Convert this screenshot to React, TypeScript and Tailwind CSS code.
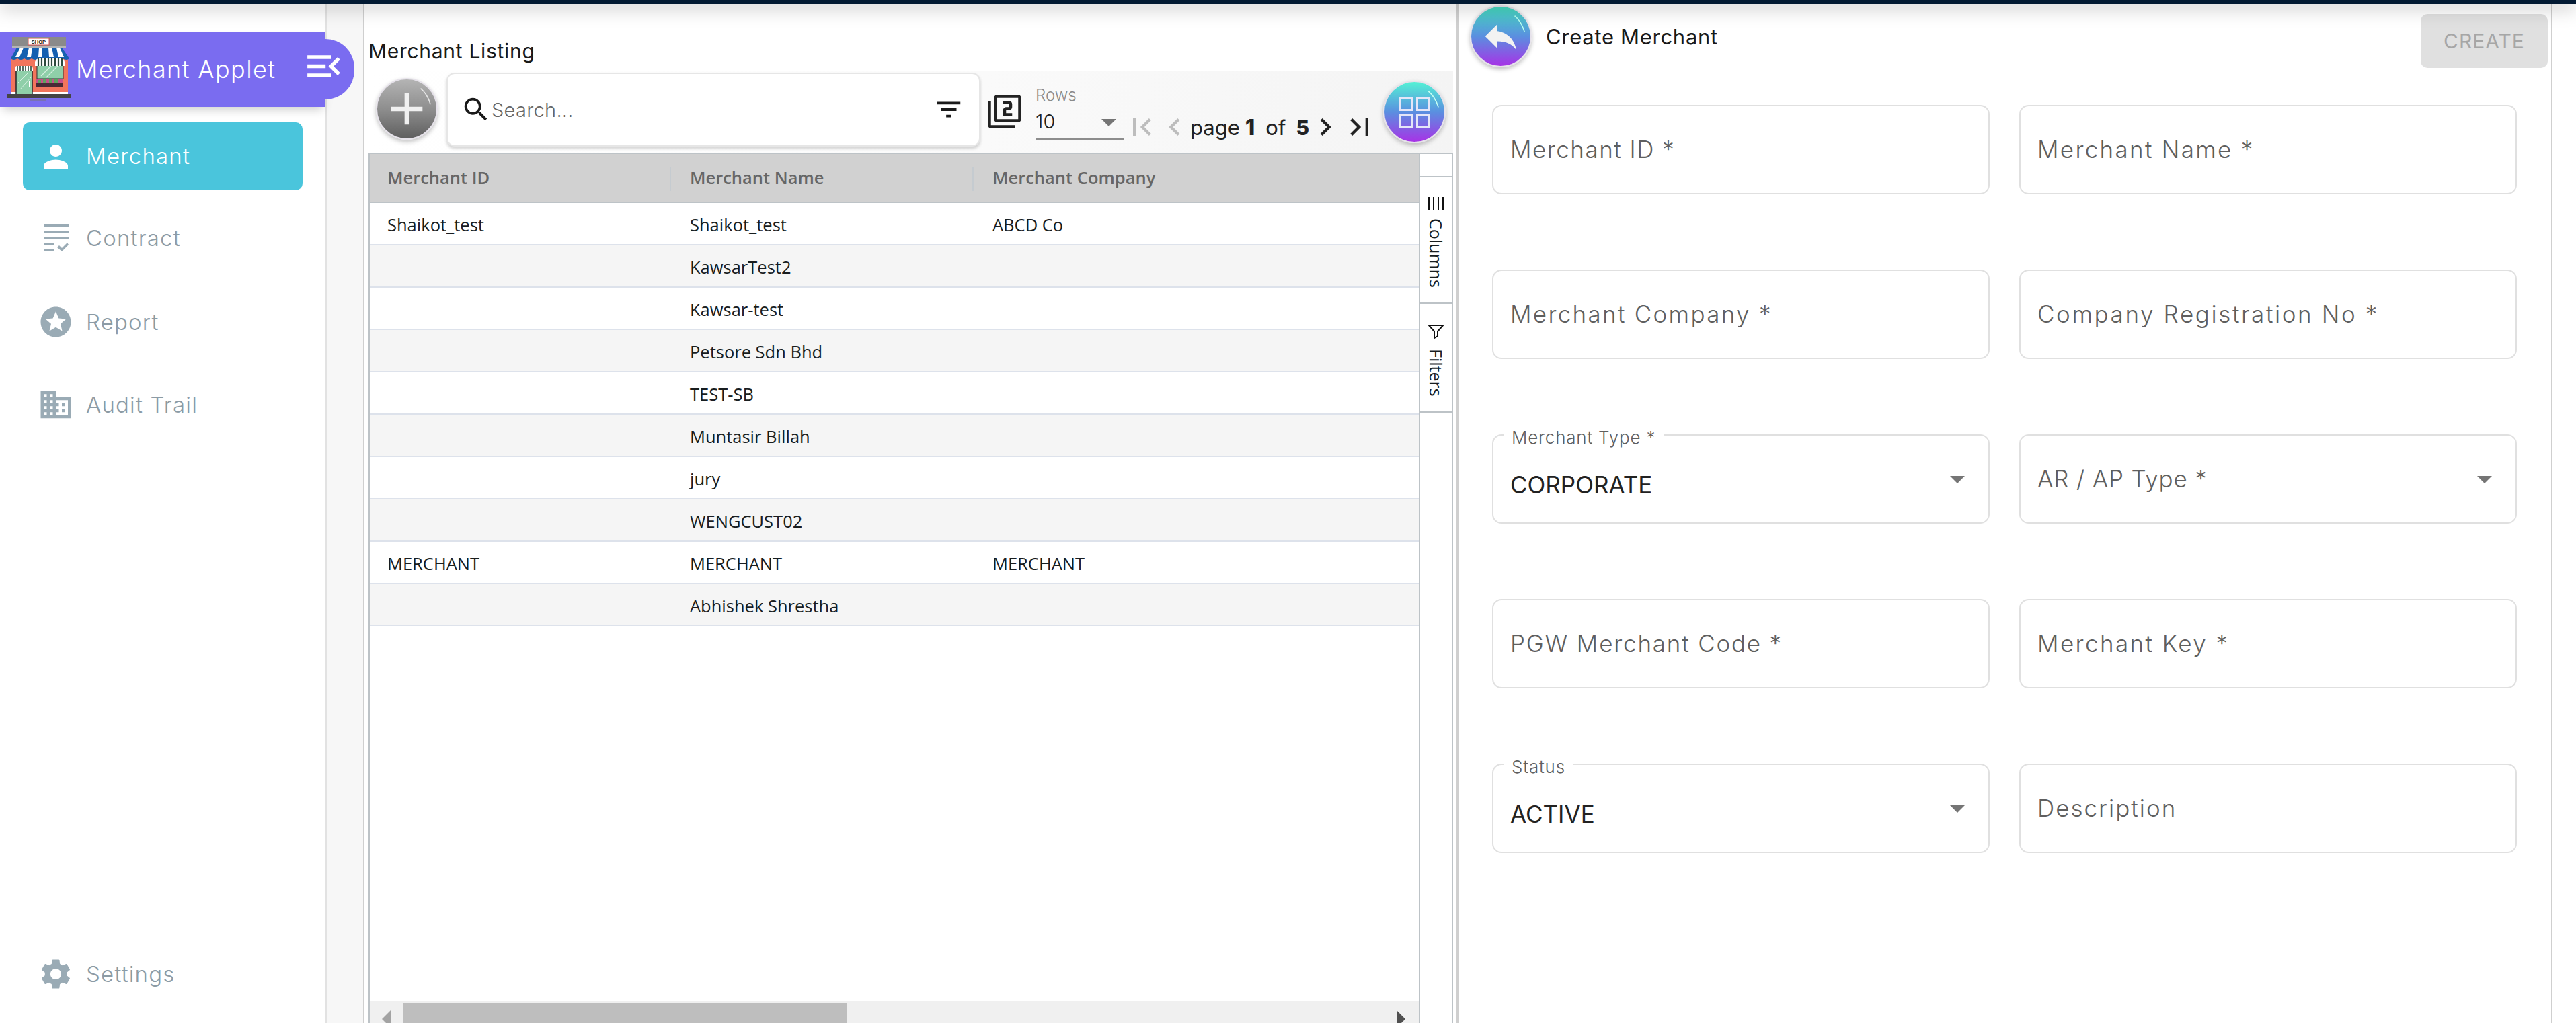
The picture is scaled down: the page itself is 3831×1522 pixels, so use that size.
import React from "react";

const P = ({ d, size, className = "" }: { d: string; size: number; className?: string }) => (
  <svg viewBox="0 0 24 24" width={size} height={size} className={`shrink-0 fill-current ${className}`}>
    <path d={d} />
  </svg>
);

const icons = {
  person: "M12 12c2.21 0 4-1.79 4-4s-1.79-4-4-4-4 1.79-4 4 1.79 4 4 4zm0 2c-2.67 0-8 1.34-8 4v2h16v-2c0-2.66-5.33-4-8-4z",
  stars: "M11.99 2C6.47 2 2 6.48 2 12s4.47 10 9.99 10C17.52 22 22 17.52 22 12S17.52 2 11.99 2zm4.24 16L12 15.45 7.77 18l1.12-4.81-3.73-3.23 4.92-.42L12 5l1.92 4.53 4.92.42-3.73 3.23L16.23 18z",
  domain: "M12 7V3H2v18h20V7H12zM6 19H4v-2h2v2zm0-4H4v-2h2v2zm0-4H4V9h2v2zm0-4H4V5h2v2zm4 12H8v-2h2v2zm0-4H8v-2h2v2zm0-4H8V9h2v2zm0-4H8V5h2v2zm10 12h-8v-2h2v-2h-2v-2h2v-2h-2V9h8v10zm-2-8h-2v2h2v-2zm0 4h-2v2h2v-2z",
  settings: "M19.14 12.94c.04-.3.06-.61.06-.94 0-.32-.02-.64-.07-.94l2.03-1.58c.18-.14.23-.41.12-.61l-1.92-3.32c-.12-.22-.37-.29-.59-.22l-2.39.96c-.5-.38-1.03-.7-1.62-.94l-.36-2.54c-.04-.24-.24-.41-.48-.41h-3.84c-.24 0-.43.17-.47.41l-.36 2.54c-.59.24-1.13.57-1.62.94l-2.39-.96c-.22-.08-.47 0-.59.22L2.74 8.87c-.12.21-.08.47.12.61l2.03 1.58c-.05.3-.09.63-.09.94s.02.64.07.94l-2.03 1.58c-.18.14-.23.41-.12.61l1.92 3.32c.12.22.37.29.59.22l2.39-.96c.5.38 1.03.7 1.62.94l.36 2.54c.05.24.24.41.48.41h3.84c.24 0 .44-.17.47-.41l.36-2.54c.59-.24 1.13-.56 1.62-.94l2.39.96c.22.08.47 0 .59-.22l1.92-3.32c.12-.22.07-.47-.12-.61l-2.01-1.58zM12 15.6c-1.98 0-3.6-1.62-3.6-3.6s1.62-3.6 3.6-3.6 3.6 1.62 3.6 3.6-1.62 3.6-3.6 3.6z",
  search: "M15.5 14h-.79l-.28-.27C15.41 12.59 16 11.11 16 9.5 16 5.91 13.09 3 9.5 3S3 5.91 3 9.5 5.91 16 9.5 16c1.61 0 3.09-.59 4.23-1.57l.27.28v.79l5 4.99L20.49 19l-4.99-5zm-6 0C7.01 14 5 11.99 5 9.5S7.01 5 9.5 5 14 7.01 14 9.5 11.99 14 9.5 14z",
  filterList: "M10 18h4v-2h-4v2zM3 6v2h18V6H3zm3 7h12v-2H6v2z",
  filter2: "M3 5H1v16c0 1.1.9 2 2 2h16v-2H3V5zm18-4H7c-1.1 0-2 .9-2 2v14c0 1.1.9 2 2 2h14c1.1 0 2-.9 2-2V3c0-1.1-.9-2-2-2zm0 16H7V3h14v14zm-4-4h-4v-2h2c1.1 0 2-.89 2-2V7c0-1.11-.9-2-2-2h-4v2h4v2h-2c-1.1 0-2 .89-2 2v4h6v-2z",
  reply: "M10 9V5l-7 7 7 7v-4.1c5 0 8.5 1.6 11 5.1-1-5-4-10-11-11z",
  menuOpen: "M3 18h13v-2H3v2zm0-5h10v-2H3v2zm0-7v2h13V6H3zm18 9.59L17.42 12 21 8.41 19.59 7l-5 5 5 5L21 15.59z",
  first: "M18.41 16.59L13.82 12l4.59-4.59L17 6l-6 6 6 6zM6 6h2v12H6z",
  prev: "M15.41 7.41L14 6l-6 6 6 6 1.41-1.41L10.83 12z",
  next: "M10 6L8.59 7.41 13.17 12l-4.58 4.59L10 18l6-6z",
  last: "M5.59 7.41L10.18 12l-4.59 4.59L7 18l6-6-6-6zM16 6h2v12h-2z",
  plus: "M19 13h-6v6h-2v-6H5v-2h6V5h2v6h6v2z",
};

const ShopLogo = () => (
  <svg viewBox="0 0 95 97" width={95} height={97} className="shrink-0">
    <rect x="7" y="0" width="80" height="16" fill="#8a8a8a" />
    <rect x="7" y="14" width="80" height="2" fill="#b5b5b5" />
    <rect x="31" y="2" width="31" height="10" fill="#fff" stroke="#d9534f" />
    <text x="46.5" y="10" fontSize="7.5" fontWeight="700" textAnchor="middle" fontFamily="Liberation Sans, sans-serif" fill="#222">SHOP</text>
    <rect x="6" y="30" width="84" height="58" fill="#f2755c" />
    <rect x="6" y="82" width="84" height="4" fill="#fff" />
    <path d="M5 32 L14 16 H81 L92 32 Q88 36 82 32 Q77 36 72 32 Q66 36 60 32 Q54 36 48 32 Q42 36 36 32 Q30 36 25 32 Q20 36 15 32 Q9 36 5 32Z" fill="#1560b0" />
    <path d="M12 30 L19 16 H24 L18 30Z M29 30 L32 16 H37 L35 30Z M46 30 L47 16 H52 L52 30Z M62 30 L61 16 H66 L69 30Z M76 30 L73 16 H78 L84 30Z" fill="#fff" />
    <rect x="13" y="50" width="24" height="36" fill="#8fcfa9" stroke="#26262a" strokeWidth="1.5" />
    <path d="M16 68 L30 54 M19 78 L35 60" stroke="#d5efe0" strokeWidth="1" />
    <rect x="32" y="66" width="1" height="8" fill="#fff" />
    <path d="M11 50 V47 Q12 43 14 43 H35 Q37 43 38 47 V50Z" fill="#fff" />
    <path d="M15 43 V50 M19 43 V50 M23 43 V50 M27 43 V50 M31 43 V50 M35 43 V50" stroke="#2d4a3e" strokeWidth="1.6" />
    <rect x="44" y="36" width="39" height="26" fill="#8fcfa9" stroke="#333" strokeWidth="1" />
    <path d="M50 58 L68 40 M58 60 L78 40" stroke="#d5efe0" strokeWidth="1.2" />
    <path d="M41 43 V37 Q43 32 47 32 H80 Q84 32 85 37 V43Z" fill="#fff" />
    <path d="M46 32 V43 M51 32 V43 M56 32 V43 M61 32 V43 M66 32 V43 M71 32 V43 M76 32 V43 M81 32 V43" stroke="#2d4a3e" strokeWidth="2.2" />
    <rect x="43" y="62" width="40" height="7" fill="#c7508a" />
    <path d="M45 64h5v5h-5z M53 62h5v7h-5z M62 63h4v6h-4z M70 62h5v7h-5z" fill="#5da35d" />
    <rect x="43" y="69" width="40" height="6" fill="#4a2a36" />
    <rect x="0" y="85" width="95" height="6" fill="#444" />
    <rect x="33" y="93.5" width="24" height="1" fill="#777" />
  </svg>
);

const ContractIcon = () => (
  <svg viewBox="0 0 37 40" width={37} height={40} className="shrink-0 fill-[#9aabb5]">
    <rect x="0" y="0" width="37" height="4" />
    <rect x="0" y="9" width="37" height="4" />
    <rect x="0" y="18" width="37" height="4" />
    <rect x="0" y="27" width="16" height="4" />
    <rect x="0" y="36" width="16" height="4" />
    <path d="M20 34l3-3 4 4 8-8 2 3-10 10z" />
  </svg>
);

const Nav = ({ icon, label, className = "" }: { icon: React.ReactNode; label: string; className?: string }) => (
  <div className={`flex h-[54px] items-center pl-[56px] text-[#8c9ba5] ${className}`}>
    {icon}
    <span className="ml-[18px] text-[33px] leading-none font-light tracking-[1.2px]">{label}</span>
  </div>
);

const Glossy = ({ from, via, to, top, size, children, className = "" }: any) => (
  <div
    className={`relative flex shrink-0 items-center justify-center rounded-full border-2 border-[#e6e2ea] shadow-[0_3px_6px_rgba(0,0,0,0.25)] ${className}`}
    style={{ width: size, height: size, background: `linear-gradient(to bottom, ${from}, ${via}, ${to})` }}
  >
    <svg viewBox="0 0 90 90" className="absolute inset-0 h-full w-full fill-none">
      <path d="M66 14 Q76 22 81 38" stroke={top} strokeWidth="1.6" />
    </svg>
    {children}
  </div>
);

const Field = ({
  label,
  legend,
  value,
  select,
  track = "tracking-[2px]",
}: {
  label?: string;
  legend?: string;
  value?: string;
  select?: boolean;
  track?: string;
}) => (
  <div className="relative flex h-[133px] items-center rounded-[14px] border-2 border-[#e0e0e0] bg-white pl-[25px]">
    {legend && (
      <span className="absolute top-[-9px] left-[15px] bg-white px-[12px] text-[26px] leading-[24px] font-light tracking-[0.8px] text-[#5f5f5f]">
        {legend}
      </span>
    )}
    {value && <span className="pt-[18px] text-[35px] leading-none font-normal text-[#222]">{value}</span>}
    {label && <span className={`text-[35px] leading-none font-light text-[#5f5f5f] ${track}`}>{label}</span>}
    {select && (
      <svg viewBox="0 0 22 11" width={22} height={11} className="absolute top-[60px] right-[35px] fill-[#757575]">
        <path d="M0 0h22L11 11z" />
      </svg>
    )}
  </div>
);

const rows: [string, string, string][] = [
  ["Shaikot_test", "Shaikot_test", "ABCD Co"],
  ["", "KawsarTest2", ""],
  ["", "Kawsar-test", ""],
  ["", "Petsore Sdn Bhd", ""],
  ["", "TEST-SB", ""],
  ["", "Muntasir Billah", ""],
  ["", "jury", ""],
  ["", "WENGCUST02", ""],
  ["MERCHANT", "MERCHANT", "MERCHANT"],
  ["", "Abhishek Shrestha", ""],
];

export default function App() {
  return (
    <div className="flex h-[1522px] w-[3831px] flex-col overflow-hidden bg-white font-['Inter',sans-serif]">
      <div className="relative z-20 h-[6px] shrink-0 bg-[#021a33] shadow-[0_4px_26px_rgba(0,0,0,0.5)]" />
      <div className="flex min-h-0 flex-1">
        {/* Sidebar */}
        <aside className="relative flex w-[486px] shrink-0 flex-col border-r-2 border-[#e2e2e2] bg-white pb-[46px]">
          <div className="relative z-10 mt-[41px] flex h-[112px] w-[484px] shrink-0 items-center bg-[#7a6cf0] pl-[11px] shadow-[0_8px_14px_-4px_rgba(0,0,0,0.2)]">
            <ShopLogo />
            <span className="ml-[7px] text-[36px] leading-none font-light tracking-[1.4px] text-white">Merchant Applet</span>
            <div className="absolute top-[11px] right-[-43px] h-[90px] w-[43px] rounded-r-[45px] bg-[#7a6cf0]" />
            <P d={icons.menuOpen} size={65} className="absolute top-[19px] left-[449px] text-white" />
          </div>
          <div className="mx-[34px] mt-[23px] flex h-[101px] w-[416px] items-center rounded-[10px] bg-[#4ac5dc] pl-[22px] text-white">
            <P d={icons.person} size={54} />
            <span className="ml-[18px] text-[33px] leading-none font-light tracking-[1.2px]">Merchant</span>
          </div>
          <Nav className="mt-[44px]" icon={<span className="flex w-[54px] justify-center"><ContractIcon /></span>} label="Contract" />
          <Nav className="mt-[71px]" icon={<P d={icons.stars} size={54} className="text-[#9aabb5]" />} label="Report" />
          <Nav className="mt-[69px]" icon={<P d={icons.domain} size={54} className="text-[#9aabb5]" />} label="Audit Trail" />
          <Nav className="mt-auto" icon={<P d={icons.settings} size={54} className="text-[#9aabb5]" />} label="Settings" />
        </aside>

        {/* gutter */}
        <div className="w-[56px] shrink-0 border-r-2 border-[#cfcfcf] bg-[#f7f7f7]" />

        {/* Listing */}
        <section className="flex w-[1628px] shrink-0 flex-col border-r-4 border-[#cfcfcf] pr-[5px] pl-[6px]">
          <div className="h-[100px] shrink-0 pt-[55px] text-[30px] leading-[30px] font-normal tracking-[0.7px] text-[#1a1a1a]">Merchant Listing</div>
          <div className="flex h-[121px] shrink-0 items-center bg-linear-to-r from-white via-[#fbfbfb] to-[#f4f4f4]">
            <Glossy from="#b4b4b4" via="#8e8e8e" to="#5f5f5f" top="#e8e8e8" size={92} className="mt-[10px] ml-[11px] self-start">
              <P d={icons.plus} size={80} className="text-[#f0f0f0]" />
            </Glossy>
            <div className="mt-[2px] ml-[13px] flex h-[110px] w-[794px] shrink-0 items-center self-start rounded-[12px] border-2 border-[#e6e6e6] bg-white pl-[19px] shadow-[0_3px_4px_rgba(0,0,0,0.18)]">
              <P d={icons.search} size={46} className="text-[#1a1a1a]" />
              <span className="text-[29px] leading-none font-light tracking-[0.3px] text-[#666]">Search...</span>
              <P d={icons.filterList} size={46} className="mr-[22px] ml-auto text-[#1a1a1a]" />
            </div>
            <P d={icons.filter2} size={54} className="ml-[9px] -translate-y-[1px] text-[#222]" />
            <div className="ml-[19px] flex w-[132px] shrink-0 flex-col self-start pt-[24px]">
              <span className="text-[24px] leading-[24px] font-light text-[#8a8a8a]">Rows</span>
              <div className="relative mt-[12px] flex h-[42px] items-start border-b-2 border-[#8d8d8d]">
                <span className="text-[29px] leading-[30px] font-light text-[#222]">10</span>
                <svg viewBox="0 0 22 11" width={22} height={11} className="absolute top-[11px] left-[98px] fill-[#757575]">
                  <path d="M0 0h22L11 11z" />
                </svg>
              </div>
            </div>
            <div className="mt-[57px] flex h-[52px] shrink-0 items-center self-start">
              <P d={icons.first} size={52} className="text-[#bdbdbd]" />
              <P d={icons.prev} size={52} className="-ml-[3px] text-[#bdbdbd]" />
              <span className="-ml-[3px] flex w-[175px] shrink-0 items-baseline text-[#222]">
                <span className="text-[31px] leading-none font-normal">page</span>
                <span className="ml-[8px] text-[33px] leading-none font-extrabold">1</span>
                <span className="ml-[16px] text-[31px] leading-none font-normal">of</span>
                <span className="ml-[15px] text-[30px] leading-none font-extrabold">5</span>
              </span>
              <P d={icons.next} size={52} className="text-[#222]" />
              <P d={icons.last} size={52} className="-ml-[1px] text-[#222]" />
            </div>
            <Glossy from="#54f1d5" via="#5a8fe0" to="#a733e6" top="#c8fff2" size={93} className="ml-[9px]">
              <svg viewBox="0 0 46 46" width={46} height={46} className="fill-none stroke-[#e4e6f8] stroke-[3px]">
                <rect x="1.5" y="1.5" width="18" height="18" />
                <rect x="26.5" y="1.5" width="18" height="18" />
                <rect x="1.5" y="26.5" width="18" height="18" />
                <rect x="26.5" y="26.5" width="18" height="18" />
              </svg>
            </Glossy>
          </div>

          {/* Table */}
          <div className="flex min-h-0 flex-1 border-2 border-b-0 border-[#bdc3c7] font-['Open_Sans',sans-serif]">
            <div className="flex min-w-0 flex-1 flex-col border-r-2 border-[#bdc3c7]">
              <div className="flex h-[73px] shrink-0 items-center border-b-2 border-[#bdc3c7] bg-[#d1d1d1] text-[25.5px] font-semibold text-[#666]">
                {["Merchant ID", "Merchant Name", "Merchant Company"].map((h, i) => (
                  <div key={h} className="relative flex h-full w-[450px] shrink-0 items-center pl-[26px]">
                    {h}
                    {i < 2 && <span className="absolute top-[19px] right-[2px] h-[36px] w-[2px] bg-[#c5cbd0]" />}
                  </div>
                ))}
              </div>
              <div className="min-h-0 flex-1">
                {rows.map((r, i) => (
                  <div
                    key={i}
                    className={`flex h-[63px] items-center border-b-2 border-[#dde2eb] pt-[3px] text-[25.5px] text-[#181d1f] ${i % 2 ? "bg-[#f5f5f5]" : "bg-white"}`}
                  >
                    {r.map((c, j) => (
                      <div key={j} className="w-[450px] shrink-0 pl-[26px]">{c}</div>
                    ))}
                  </div>
                ))}
              </div>
              <div className="flex h-[32px] shrink-0 items-start overflow-hidden bg-[#f0f0f0]">
                <svg viewBox="0 0 13 26" width={13} height={26} className="mt-[13px] ml-[18px] shrink-0 fill-[#a3a3a3]">
                  <path d="M13 0v26L0 13z" />
                </svg>
                <div className="mt-[2px] ml-[19px] h-[30px] w-[659px] shrink-0 bg-[#bebebe]" />
                <svg viewBox="0 0 13 26" width={13} height={26} className="mt-[13px] mr-[20px] ml-auto shrink-0 fill-[#505050]">
                  <path d="M0 0v26l13-13z" />
                </svg>
              </div>
            </div>
            {/* Side buttons */}
            <div className="flex w-[47px] shrink-0 flex-col text-[25px] text-[#181d1f]">
              <div className="h-[35px] shrink-0 border-b-2 border-[#bdc3c7]" />
              <div className="flex h-[188px] shrink-0 flex-col items-center border-b-[3px] border-[#bdc3c7] pt-[29px]">
                <svg viewBox="0 0 23 19" width={23} height={19} className="shrink-0 fill-[#111]">
                  <rect x="0" width="2" height="19" />
                  <rect x="7" width="2" height="19" />
                  <rect x="14" width="2" height="19" />
                  <rect x="21" width="2" height="19" />
                </svg>
                <span className="mt-[13px] leading-[24px] [writing-mode:vertical-rl]">Columns</span>
              </div>
              <div className="flex h-[162px] shrink-0 flex-col items-center border-b-2 border-[#bdc3c7] pt-[31px]">
                <svg viewBox="0 0 23 21" width={23} height={21} className="shrink-0 fill-none stroke-[#111] stroke-[2px]">
                  <path d="M1 1h21l-8 9v7l-5 3V10z" />
                </svg>
                <span className="mt-[15px] leading-[24px] [writing-mode:vertical-rl]">Filters</span>
              </div>
            </div>
          </div>
        </section>

        {/* Create panel */}
        <section className="flex w-[1626px] shrink-0 flex-col border-r-2 border-[#cfcfcf]">
          <div className="flex h-[150px] shrink-0 items-start">
            <Glossy from="#45dcc0" via="#5a8fe0" to="#a733e6" top="#b8fff0" size={92} className="mt-[2px] ml-[16px]">
              <P d={icons.reply} size={62} className="text-[#f2f2f2]" />
            </Glossy>
            <span className="mt-[34px] ml-[21px] text-[31px] leading-[30px] font-normal tracking-[0.7px] text-[#1a1a1a]">Create Merchant</span>
            <div className="mt-[15px] mr-[5px] ml-auto flex h-[80px] w-[189px] items-center justify-center rounded-[10px] bg-[#e0e0e0] text-[30px] leading-none font-normal tracking-[1px] text-[#a6a6a6]">
              CREATE
            </div>
          </div>
          <div className="grid grid-cols-[740px_740px] gap-x-[44px] gap-y-[112px] pl-[49px]">
            <Field label="Merchant ID *" track="tracking-[1.5px]" />
            <Field label="Merchant Name *" track="tracking-[2.3px]" />
            <Field label="Merchant Company *" track="tracking-[2.3px]" />
            <Field label="Company Registration No *" track="tracking-[2.6px]" />
            <Field legend="Merchant Type *" value="CORPORATE" select />
            <Field label="AR / AP Type *" select track="tracking-[0.8px]" />
            <Field label="PGW Merchant Code *" track="tracking-[1.8px]" />
            <Field label="Merchant Key *" track="tracking-[2.4px]" />
            <Field legend="Status" value="ACTIVE" select />
            <Field label="Description" />
          </div>
        </section>
      </div>
    </div>
  );
}
